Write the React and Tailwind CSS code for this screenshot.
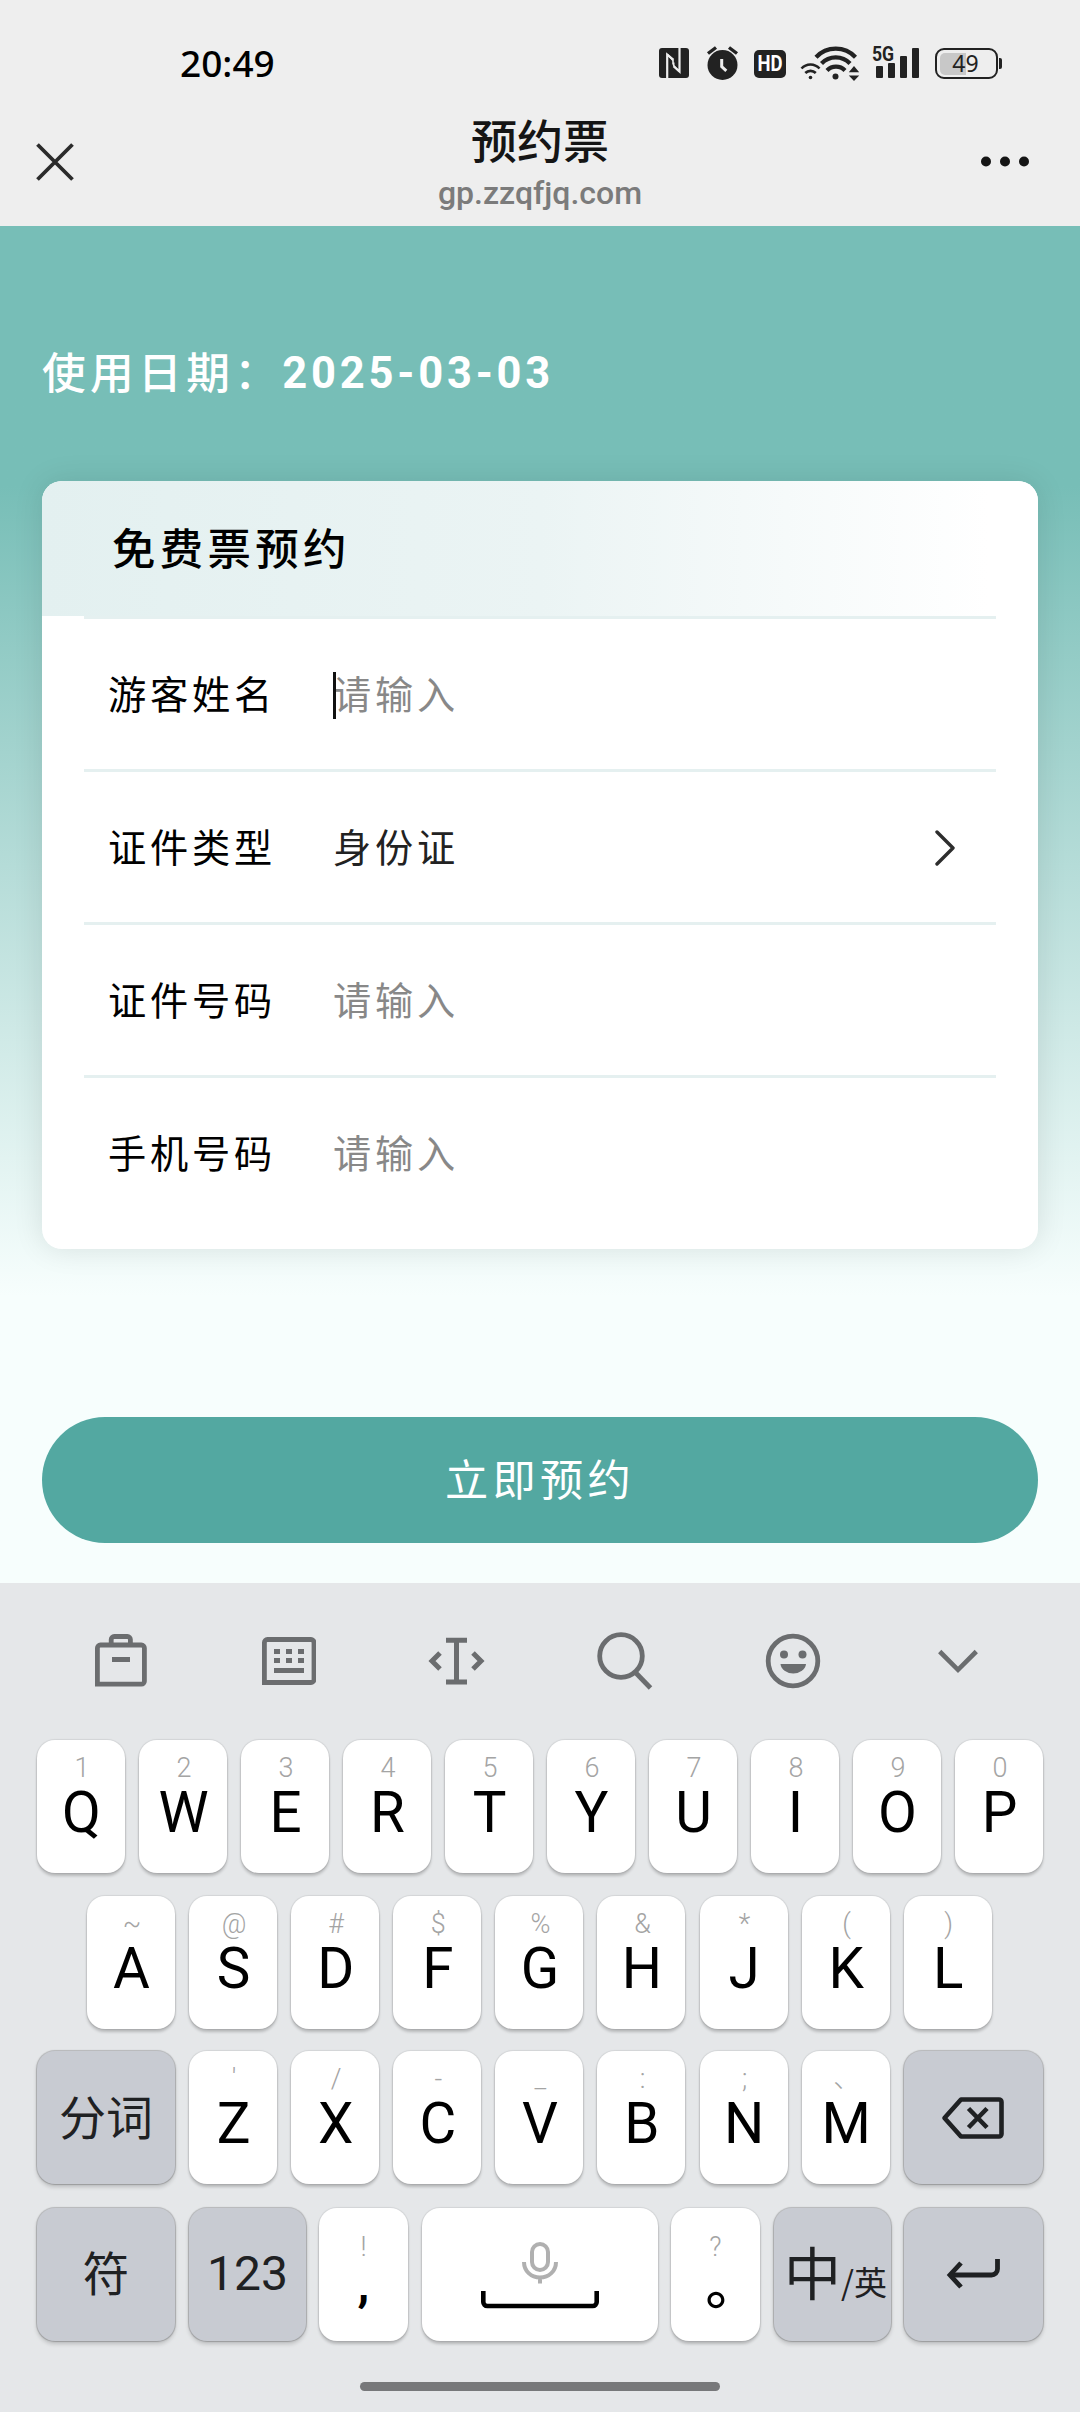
import React, { useState } from 'react';

const fields = [
  { key: 'name', label: '游客姓名', placeholder: '请输入', focused: true },
  { key: 'type', label: '证件类型', value: '身份证', select: true },
  { key: 'number', label: '证件号码', placeholder: '请输入' },
  { key: 'phone', label: '手机号码', placeholder: '请输入' },
];

const row1 = [['Q', '1'], ['W', '2'], ['E', '3'], ['R', '4'], ['T', '5'], ['Y', '6'], ['U', '7'], ['I', '8'], ['O', '9'], ['P', '0']];
const row2 = [['A', '~'], ['S', '@'], ['D', '#'], ['F', '$'], ['G', '%'], ['H', '&'], ['J', '*'], ['K', '('], ['L', ')']];
const row3 = [['Z', "'"], ['X', '/'], ['C', '-'], ['V', '_'], ['B', ':'], ['N', ';'], ['M', '、']];

const StatusBar = () => (
  <div className="flex h-[82px] items-end pl-[180px] pr-[78px]">
    <span className="mb-px font-['Noto_Sans',sans-serif] text-[37px] leading-[36px] font-medium text-black">20:49</span>
    <div className="ml-auto flex h-[38px] items-start text-[#222]">
      {/* NFC */}
      <svg className="mt-[4px] mr-[17px]" width="30" height="30" viewBox="0 0 30 30">
        <rect width="30" height="30" rx="3" fill="#222" />
        <path d="M8.200 30V6.500l6.300 5.300M20.500 0v23.500l-6-5.300" fill="none" stroke="#eee" strokeWidth="2.200" />
        <path d="M8.500 6.500l5.500 6v4M20.200 23.500l-5.500-6v-3" fill="none" stroke="#eee" strokeWidth="1.600" />
      </svg>
      {/* alarm */}
      <svg className="mt-[2px] mr-[15px]" width="33" height="34" viewBox="0 0 33 34">
        <circle cx="16.500" cy="19" r="15" fill="#222" />
        <path d="M2 7.500l8-6M31 7.500l-8-6" stroke="#222" strokeWidth="3.400" fill="none" />
        <path d="M15.700 13v7.500l4.600 4.300" stroke="#eee" strokeWidth="3" fill="none" />
      </svg>
      {/* HD */}
      <div className="mt-[6px] mr-[14px] flex h-[28px] w-[32px] items-center justify-center rounded-[5px] bg-[#222]">
        <span className="font-[Roboto,sans-serif] text-[22px] leading-none font-bold text-white scale-x-[0.84]">HD</span>
      </div>
      {/* wifi */}
      <svg className="mt-[1px] mr-[13px]" width="60" height="36" viewBox="0 0 60 36" fill="none" stroke="#222">
        <g strokeWidth="4.200">
          <path d="M16 12.200a27 27 0 0 1 39.500 0" />
          <path d="M21.500 18.500a19.500 19.500 0 0 1 28.500 0" />
          <path d="M27 25.500a12.500 12.500 0 0 1 18 0" />
        </g>
        <circle cx="35.500" cy="31.500" r="3" fill="#222" stroke="none" />
        <g strokeWidth="2.600">
          <path d="M1.500 23.500a12 12 0 0 1 18 0" />
          <path d="M5.300 28a7.500 7.500 0 0 1 10.500 0" />
        </g>
        <circle cx="10.500" cy="32.500" r="1.800" fill="#222" stroke="none" />
        <path d="M54 21l5.200 6.200H48.800zM54 36l-5.200-5.600h10.400z" fill="#222" stroke="none" />
      </svg>
      {/* signal */}
      <div className="relative mt-[2px] mr-[16px] h-[32px] w-[46px]">
        <span className="absolute -left-[1px] top-0 origin-left scale-x-[0.84] font-[Roboto,sans-serif] text-[21px] leading-[16px] font-bold">5G</span>
        <div className="flex h-full items-end gap-[5.500px] pl-[3px]">
          <i className="h-[12px] w-[6.500px] rounded-[1px] bg-[#222]" />
          <i className="h-[15px] w-[6.500px] rounded-[1px] bg-[#222]" />
          <i className="h-[22px] w-[6.500px] rounded-[1px] bg-[#222]" />
          <i className="h-[30px] w-[6.500px] rounded-[1px] bg-[#222]" />
        </div>
      </div>
      {/* battery */}
      <div className="mt-[4px] flex items-center">
        <div className="relative flex h-[31px] w-[63px] items-center justify-center rounded-[9px] border-[2.500px] border-[#222]">
          <i className="absolute left-[2.500px] top-[2.500px] bottom-[2.500px] w-[26px] rounded-l-[5px] bg-[#c8c8c8]" />
          <span className="relative pr-[2px] font-['Noto_Sans',sans-serif] text-[23px] leading-none">49</span>
        </div>
        <i className="ml-[1px] h-[11px] w-[3px] rounded-r-[2px] bg-[#222]" />
      </div>
    </div>
  </div>
);

const NavBar = () => (
  <div className="flex h-[144px] justify-between px-[36px]">
    <svg className="mt-[61px]" width="38" height="38" viewBox="0 0 38 38">
      <path d="M1.500 1.500l35 35M36.500 1.500l-35 35" stroke="#2b2b2b" strokeWidth="3.800" />
    </svg>
    <div className="flex flex-col items-center pt-[29px] pl-[26px]">
      <h1 className="text-[46px] leading-[54px] font-medium text-[#151515]">预约票</h1>
      <p className="mt-[9px] font-[Roboto,sans-serif] text-[32px] leading-[38px] font-medium text-[#7b7b7b]">gp.zzqfjq.com</p>
    </div>
    <svg className="mt-[74px] mr-[14px]" width="50" height="12" viewBox="0 0 50 12" fill="#151515">
      <circle cx="6" cy="5.500" r="5" />
      <circle cx="25" cy="5.500" r="5" />
      <circle cx="44" cy="5.500" r="5" />
    </svg>
  </div>
);

const FormRow = ({ field }) => (
  <div className="mx-[42px] flex h-[153px] items-center border-b-[3px] border-[#e5f0f0] pb-[2px] pl-[24px] text-[38.200px] tracking-[0.1em] last:border-white">
    <label className="w-[225px] text-black">{field.label}</label>
    {field.focused && <i className="-mr-[3px] h-[47px] w-[3px] translate-y-[2px] bg-[#111]" />}
    {field.value ? <span className="text-[#222]">{field.value}</span> : <span className="text-[#888]">{field.placeholder}</span>}
    {field.select && (
      <svg className="mt-[3px] ml-auto mr-[41px]" width="20" height="36" viewBox="0 0 20 36" fill="none">
        <path d="M2 2l16 16L2 34" stroke="#2d2d2d" strokeWidth="3.400" strokeLinecap="round" strokeLinejoin="round" />
      </svg>
    )}
  </div>
);

const Key = ({ label, hint }) => (
  <button className="flex h-[133px] w-[88px] shrink-0 flex-col items-center rounded-[18px] bg-white font-[Roboto,'Noto_Sans_CJK_SC',sans-serif] shadow-[0_0_1px_1px_rgba(0,0,0,0.08),0_3px_3px_rgba(0,0,0,0.2)]">
    <span className="mt-[12px] h-[32px] pl-[2px] text-[27px] leading-[32px] font-light text-[#a4a4a4]">{hint}</span>
    <span className="mt-[-4px] pl-px text-[56.500px] leading-[67px] text-black">{label}</span>
  </button>
);

const FnKey = ({ children, className }) => (
  <button className={`flex h-[133px] shrink-0 items-center justify-center rounded-[18px] bg-[#c8cbd2] text-[#1f2123] shadow-[0_0_1px_1px_rgba(0,0,0,0.2),0_3px_4px_rgba(0,0,0,0.18)] ${className}`}>
    {children}
  </button>
);

const Toolbar = () => (
  <div className="flex h-[157px] items-start pl-[93px] pt-[48px]">
    <svg className="mr-[111px]" width="56" height="58" viewBox="0 0 56 58" fill="none" stroke="#6b6d6f" strokeWidth="4.800">
      <path d="M4.400 53.200V17a3 3 0 0 1 3-3h41a3 3 0 0 1 3 3v33.200a3 3 0 0 1-3 3z" />
      <path d="M18.200 14V8.500a3 3 0 0 1 3-3h13.200a3 3 0 0 1 3 3V14M19 28.500h18" />
    </svg>
    <svg className="mr-[112px]" width="56" height="58" viewBox="0 0 56 58" fill="none" stroke="#6b6d6f" strokeWidth="4.800">
      <path d="M4.400 51.500V11.500a3 3 0 0 1 3-3H51a3 3 0 0 1 3 3v37a3 3 0 0 1-3 3z" />
      <path d="M14 20.500h6m6 0h6m6 0h6M14 29.500h6m6 0h6m6 0h6M14 39.500h30" />
    </svg>
    <svg className="mr-[112px]" width="57" height="58" viewBox="0 0 57 58" fill="none" stroke="#6b6d6f" strokeWidth="5">
      <path d="M18 9.300h21M18 51h21M28.500 9v42" />
      <path d="M12 22l-8 8 8 8M45 22l8 8-8 8" />
    </svg>
    <svg className="mr-[112px]" width="56" height="60" viewBox="0 0 56 60" fill="none" stroke="#6b6d6f" strokeWidth="4.800">
      <circle cx="24" cy="25" r="21.300" />
      <path d="M37.500 40.500L53.500 57" />
    </svg>
    <svg className="mr-[117px]" width="56" height="60" viewBox="0 0 56 60" fill="none" stroke="#6b6d6f" strokeWidth="4.800">
      <circle cx="28" cy="30" r="24.800" />
      <circle cx="19" cy="23.500" r="4" fill="#6b6d6f" stroke="none" />
      <circle cx="37.500" cy="23.500" r="4" fill="#6b6d6f" stroke="none" />
      <path d="M15.500 33h25.500a12.800 10.500 0 0 1-25.500 0z" fill="#6b6d6f" stroke="none" />
    </svg>
    <svg width="40" height="60" viewBox="0 0 40 60" fill="none" stroke="#6b6d6f" strokeWidth="4.600">
      <path d="M1.700 20.500L20 38.800l18.300-18.300" />
    </svg>
  </div>
);

const Keyboard = () => (
  <div className="h-[829px] bg-[#e5e7e9]">
    <Toolbar />
    <div className="flex gap-[14px] pl-[37px]">
      {row1.map(([label, hint]) => <Key key={label} label={label} hint={hint} />)}
    </div>
    <div className="mt-[23px] flex gap-[14.100px] pl-[87px]">
      {row2.map(([label, hint]) => <Key key={label} label={label} hint={hint} />)}
    </div>
    <div className="mt-[22px] flex gap-[14.100px] pl-[37px]">
      <FnKey className="w-[138px] pb-[4px] text-[47px]">分词</FnKey>
      {row3.map(([label, hint]) => <Key key={label} label={label} hint={hint} />)}
      <FnKey className="w-[139px]">
        <svg width="64" height="44" viewBox="0 0 64 44" fill="none" stroke="#1f2123" strokeWidth="4.600">
          <path d="M3.500 22L20 3.500h38a2.500 2.500 0 0 1 2.500 2.500v32a2.500 2.500 0 0 1-2.500 2.500H20z" strokeLinejoin="round" />
          <path d="M27.500 12.500l18.500 19M46 12.500l-18.500 19" />
        </svg>
      </FnKey>
    </div>
    <div className="mt-[24px] flex pl-[37px]">
      <FnKey className="w-[138px] mr-[14px] pb-[7px] text-[46.500px]">符</FnKey>
      <FnKey className="w-[117px] mr-[13px] pb-[2px] font-[Roboto,sans-serif] text-[48px]">123</FnKey>
      <button className="mr-[14px] flex h-[133px] w-[89px] flex-col items-center rounded-[18px] bg-white shadow-[0_0_1px_1px_rgba(0,0,0,0.08),0_3px_3px_rgba(0,0,0,0.2)]">
        <span className="mt-[23px] font-[Roboto,sans-serif] text-[27px] leading-[32px] font-light text-[#a4a4a4]">!</span>
        <span className="font-[Roboto,sans-serif] text-[48px] leading-[44px] font-bold text-black">,</span>
      </button>
      {/* space */}
      <button className="mr-[13.500px] flex h-[133px] w-[235.500px] flex-col items-center rounded-[18px] bg-white pt-[33px] shadow-[0_0_1px_1px_rgba(0,0,0,0.08),0_3px_3px_rgba(0,0,0,0.2)]">
        <svg width="38" height="44" viewBox="0 0 38 44" fill="none" stroke="#b0b0b0" strokeWidth="4">
          <rect x="11" y="3" width="16" height="26" rx="8" />
          <path d="M3 21c0 9 7 15.500 16 15.500s16-6.500 16-15.500M19 36.500v6" />
        </svg>
        <svg className="mt-[6px] ml-px" width="118" height="18" viewBox="0 0 118 18" fill="none" stroke="#000" strokeWidth="4.600">
          <path d="M2.300 0v11a4 4 0 0 0 4 4h105.400a4 4 0 0 0 4-4V0" />
        </svg>
      </button>
      <button className="mr-[14px] flex h-[133px] w-[89px] flex-col items-center rounded-[18px] bg-white shadow-[0_0_1px_1px_rgba(0,0,0,0.08),0_3px_3px_rgba(0,0,0,0.2)]">
        <span className="mt-[23px] font-[Roboto,sans-serif] text-[27px] leading-[32px] font-light text-[#a4a4a4]">?</span>
        <span className="pl-[34px] text-[54px] leading-[38px] font-medium text-black">。</span>
      </button>
      <FnKey className="w-[117px] mr-[13px] pl-[6px]">
        <span className="mb-[8px] text-[57px] leading-none">中</span>
        <span className="mt-[13px] text-[33px] leading-none whitespace-nowrap">/英</span>
      </FnKey>
      <FnKey className="w-[139px]">
        <svg width="56" height="32" viewBox="0 0 56 32" fill="none" stroke="#1f2123" strokeWidth="4.800">
          <path d="M51.500 0v10a6 6 0 0 1-6 6H5" />
          <path d="M15 4L4 16l11 12" />
        </svg>
      </FnKey>
    </div>
    <div className="mx-auto mt-[41px] h-[9px] w-[360px] rounded-full bg-[#77787a]" />
  </div>
);

const App = () => {
  const [date] = useState('2025-03-03');

  return (
    <div className="h-[2412px] w-[1080px] overflow-hidden bg-[#eee] font-['Noto_Sans_CJK_SC',sans-serif]">
      <StatusBar />
      <NavBar />

      <main className="h-[1357px] bg-linear-to-b from-[#77beb7] from-[260px] via-[#b5dcd8] via-[640px] to-[#f7fefd] to-[1070px] px-[42px] pt-[112px]">
        <div className="flex h-[70px] items-center text-white">
          <span className="mb-[5px] text-[43.700px] font-medium tracking-[0.1em]">使用日期：</span>
          <span className="mt-[2px] font-[Roboto,sans-serif] text-[43.500px] font-bold tracking-[0.087em]">{date}</span>
        </div>

        <section className="mt-[73px] h-[768px] overflow-hidden rounded-[20px] bg-white shadow-[0_0_30px_rgba(0,0,0,0.1)]">
          <div className="h-[135px] bg-linear-to-r from-[#e3f0f0] via-[#ebf4f4] via-50% to-white to-95% pl-[70px]">
            <h2 className="text-[43.400px] leading-[131px] font-medium tracking-[0.1em] text-black">免费票预约</h2>
          </div>
          <div className="mx-[42px] h-[3px] bg-[#e5f0f0]" />
          {fields.map((field) => <FormRow key={field.key} field={field} />)}
        </section>

        <button className="mt-[168px] h-[126px] w-full rounded-full bg-[#53a8a1] pb-[6px] text-[43.200px] tracking-[0.1em] text-white">
          立即预约
        </button>
      </main>

      <Keyboard />
    </div>
  );
};

export default App;
